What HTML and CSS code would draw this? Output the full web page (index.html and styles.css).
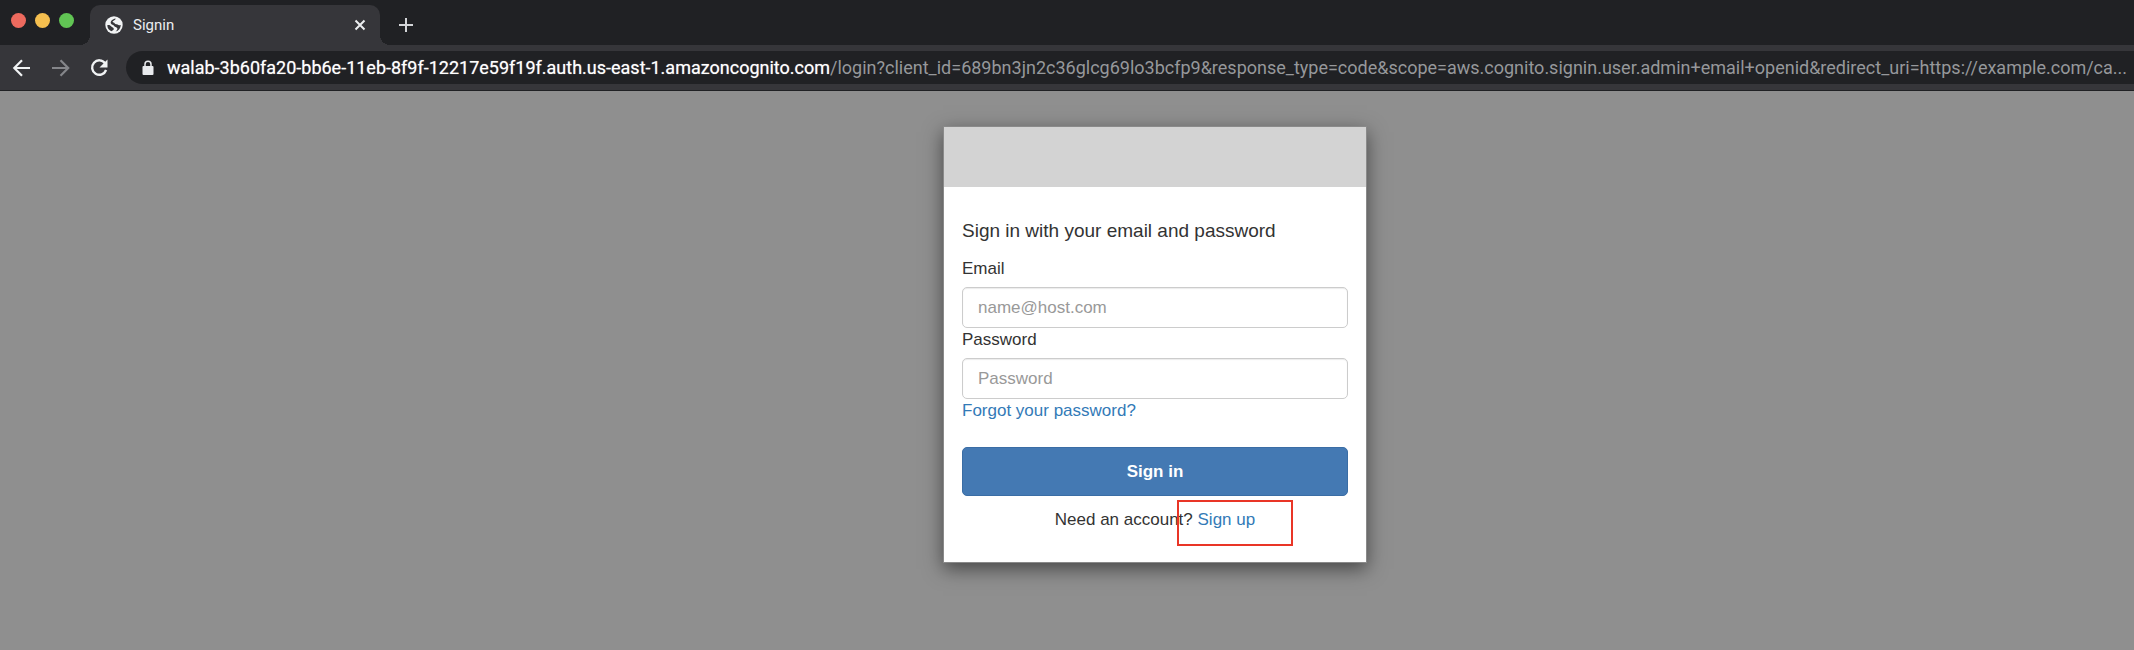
FILE: index.html
```html
<!DOCTYPE html>
<html lang="en">
<head>
<meta charset="utf-8">
<title>Signin</title>
<link rel="stylesheet" href="styles.css">
</head>
<body>
<header class="browser">
  <div class="tab-strip">
    <div class="lights">
      <span class="light light-close"></span>
      <span class="light light-min"></span>
      <span class="light light-max"></span>
    </div>
    <div class="tab">
      <svg class="favicon" viewBox="0 0 18 18" aria-hidden="true">
        <circle cx="9" cy="9" r="8.700" fill="#f1f3f4"/>
        <path d="M10.600 2.400C10.400 4.600 7.700 4.200 7.600 5.600C7.600 6.800 9.300 6.200 9.800 7.600C10.200 8.700 12 7.900 12.900 8.800C13.600 9.500 14.800 9.300 15.800 8.900C15.700 12 13.600 14.700 10.600 15.500C11.800 14.500 12.900 13.300 12.200 12C11.500 10.800 9.800 11.200 9.200 9.900C8.700 8.800 6.300 8.700 5.800 7.200C5.200 5.200 7.500 2.800 10.600 2.400Z" fill="#36363a"/>
        <path d="M2.300 9.200C4.200 8.700 5.600 9.400 6.300 10.600C7 11.700 8.800 11.400 8.800 12.900C8.800 14.100 7.200 14.200 6.500 15.300C4 14.300 2.300 12 2.300 9.200Z" fill="#36363a"/>
      </svg>
      <span class="tab-title">Signin</span>
      <button class="icon-button" aria-label="Close tab">
        <svg width="12" height="12" viewBox="0 0 12 12"><path d="M1.500 1.500l9 9M10.500 1.500l-9 9" stroke="#eceef0" stroke-width="2"/></svg>
      </button>
    </div>
    <button class="icon-button" aria-label="New tab">
      <svg width="16" height="16" viewBox="0 0 16 16"><path d="M8 1v14M1 8h14" stroke="#d3d5d8" stroke-width="2"/></svg>
    </button>
  </div>
  <nav class="toolbar">
    <div class="nav-buttons">
      <button class="icon-button" aria-label="Back">
        <svg width="20" height="20" viewBox="0 0 20 20" fill="none" stroke="#f1f3f4" stroke-width="2.200"><path d="M18 10H3M10 2.200L2.300 10l7.700 7.800"/></svg>
      </button>
      <button class="icon-button" aria-label="Forward">
        <svg width="20" height="20" viewBox="0 0 20 20" fill="none" stroke="#85868a" stroke-width="2.200"><path d="M1 10h16M9.500 2.200l7.700 7.800-7.700 7.800"/></svg>
      </button>
      <button class="icon-button" aria-label="Reload">
        <svg width="20" height="20" viewBox="0 0 20 20"><path d="M15.100 5.200A7.200 7.200 0 1 0 16.100 12" fill="none" stroke="#f1f3f4" stroke-width="2.400"/><path d="M17.500 1.500v8h-8z" fill="#f1f3f4"/></svg>
      </button>
    </div>
    <div class="address">
      <svg class="lock" width="12" height="16" viewBox="0 0 12 16" aria-hidden="true"><rect x=".5" y="6" width="11" height="9" rx="1" fill="#e8eaed"/><path d="M3 6.500V4.300a3 3 0 0 1 6 0v2.200" fill="none" stroke="#e8eaed" stroke-width="1.500"/></svg>
      <span class="url"><span class="host">walab-3b60fa20-bb6e-11eb-8f9f-12217e59f19f.auth.us-east-1.amazoncognito.com</span>/login?client_id=689bn3jn2c36glcg69lo3bcfp9&amp;response_type=code&amp;scope=aws.cognito.signin.user.admin+email+openid&amp;redirect_uri=https://example.com/ca...</span>
    </div>
  </nav>
</header>
<main class="page">
  <section class="card">
    <div class="banner"></div>
    <form class="form">
      <h1 class="heading">Sign in with your email and password</h1>
      <label class="label" for="email">Email</label>
      <input class="field" id="email" type="email" placeholder="name@host.com">
      <label class="label" for="password">Password</label>
      <input class="field" id="password" type="password" placeholder="Password">
      <a class="link" href="#">Forgot your password?</a>
      <button class="submit" type="submit">Sign in</button>
      <p class="signup">Need an account? <a class="link marked" href="#">Sign up</a></p>
    </form>
  </section>
</main>
</body>
</html>
```
FILE: styles.css
```css
* {
  box-sizing: border-box;
}

body {
  margin: 0;
  min-height: 100vh;
  display: flex;
  flex-direction: column;
  overflow: hidden;
  background: #8f8f8f;
  color: #333;
  font: 17px/24px "Liberation Sans", Arial, sans-serif;
}

.browser {
  background: #36363a;
  border-bottom: 1px solid #202124;
  font-family: Roboto, sans-serif;
}

.icon-button {
  display: flex;
  padding: 0;
  border: 0;
  background: none;
}

.tab-strip {
  display: flex;
  align-items: center;
  height: 45px;
  padding-top: 5px;
  background: #202124;
}

.lights {
  display: flex;
  gap: 9px;
  width: 90px;
  padding: 0 0 10px 11px;
}

.light {
  width: 15px;
  height: 15px;
  border-radius: 50%;
}

.light-close {
  background: #ed6a5e;
}

.light-min {
  background: #f5bf4f;
}

.light-max {
  background: #61c554;
}

.tab {
  position: relative;
  display: flex;
  align-items: center;
  gap: 10px;
  width: 290px;
  height: 40px;
  margin-right: 18px;
  padding: 0 14px 0 15px;
  border-radius: 10px 10px 0 0;
  background: #36363a;
}

.tab::before,
.tab::after {
  content: "";
  position: absolute;
  bottom: 0;
  width: 10px;
  height: 10px;
}

.tab::before {
  right: 100%;
  background: radial-gradient(circle at 0 0, #202124 10px, #36363a 10px);
}

.tab::after {
  left: 100%;
  background: radial-gradient(circle at 100% 0, #202124 10px, #36363a 10px);
}

.favicon {
  width: 18px;
  height: 18px;
}

.tab-title {
  flex: 1;
  color: #eceef0;
  font-size: 15px;
}

.toolbar {
  display: flex;
  align-items: center;
  height: 45px;
}

.nav-buttons {
  display: flex;
  gap: 19px;
  width: 126px;
  flex: none;
  padding-left: 12px;
}

.address {
  display: flex;
  align-items: center;
  gap: 13px;
  flex: 1;
  min-width: 0;
  height: 33px;
  padding-left: 16px;
  border-radius: 17px 0 0 17px;
  background: #202124;
}

.lock {
  flex: none;
}

.url {
  color: #96989b;
  font-size: 18px;
  white-space: nowrap;
}

.host {
  color: #fff;
  text-shadow: 0 0 1px rgba(255, 255, 255, .6);
}

.page {
  flex: 1;
  display: flex;
  justify-content: center;
  align-items: flex-start;
  padding: 35px 0 35px 176px;
}

.card {
  width: 424px;
  border: 1px solid #8a8a8a;
  background: #fff;
  box-shadow: 0 6px 18px rgba(0, 0, 0, .5);
}

.banner {
  height: 60px;
  background: #d3d3d3;
}

.form {
  display: flex;
  flex-direction: column;
  padding: 30px 18px;
}

.heading {
  margin: 0 0 12px;
  font-size: 19px;
  font-weight: 400;
  line-height: 28px;
}

.field {
  height: 41px;
  margin-top: 6px;
  padding: 0 15px;
  border: 1px solid #ccc;
  border-radius: 5px;
  background: #fff;
  box-shadow: inset 0 1px 1px rgba(0, 0, 0, .08);
  font: inherit;
}

.field::placeholder {
  color: #999;
}

.link {
  color: #337ab7;
  text-decoration: none;
}

.submit {
  height: 49px;
  margin: 24px 0 12px;
  border: 1px solid #3a6da5;
  border-radius: 5px;
  background: #4479b3;
  color: #fff;
  font: inherit;
  font-weight: 700;
}

.signup {
  margin: 0;
  text-align: center;
}

.marked {
  position: relative;
}

.marked::after {
  content: "";
  position: absolute;
  inset: -10px -38px -17px -21px;
  border: 2px solid #e93526;
}
```
